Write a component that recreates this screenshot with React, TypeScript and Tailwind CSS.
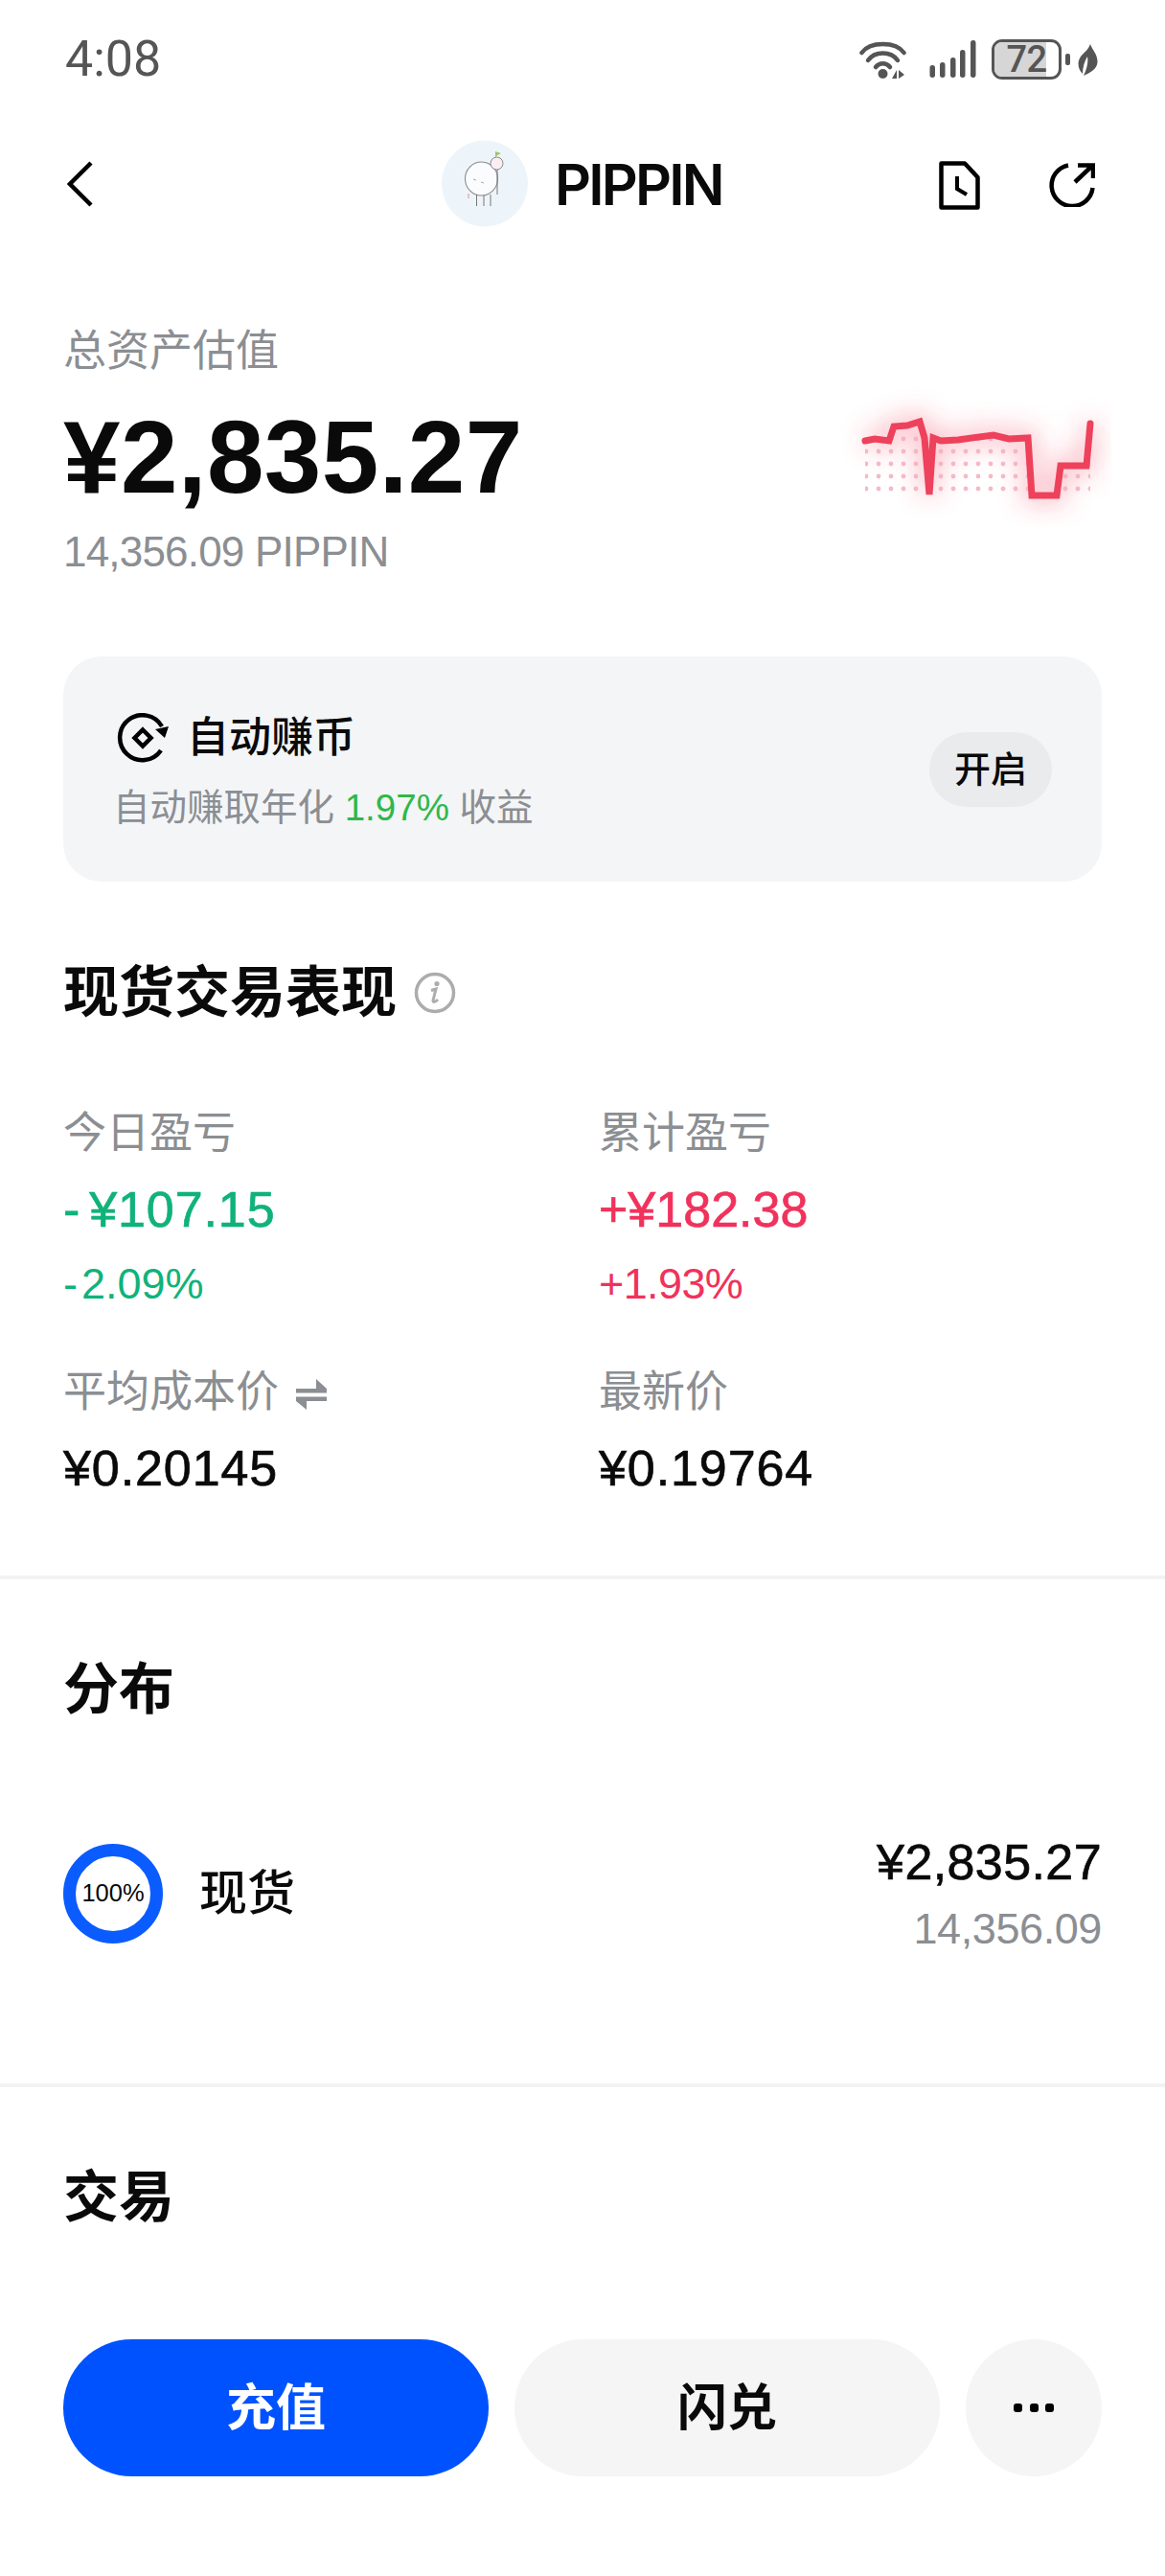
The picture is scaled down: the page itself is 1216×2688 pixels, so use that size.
import React from "react";

const line = "43,60 53,58 68,60 73,45 87,44 100,40 105,57 110,116 114,57 122,60 140,59 177,54 193,58 213,57 217,117 243,117 247,86 274,86 278,42";
const dots: [number, number][] = [];
for (let r = 0; r < 5; r++) for (let c = 0; c < 19; c++) dots.push([44 + c * 13, 58 + r * 13]);

function Spark() {
  return (
    <svg width="300" height="150" viewBox="0 0 300 150" className="mt-[56px] shrink-0">
      <defs>
        <clipPath id="under"><polygon points={`43,60 ${line} 278,125 43,125`} /></clipPath>
        <filter id="glow" x="-30%" y="-70%" width="160%" height="240%"><feGaussianBlur stdDeviation="13" /></filter>
      </defs>
      <polyline points={line} fill="none" stroke="#f4475f" strokeOpacity="0.34" strokeWidth="18" filter="url(#glow)" />
      <g clipPath="url(#under)">
        {dots.map(([x, y], i) => <circle key={i} cx={x} cy={y} r="2.400" fill="#f3aebc" fillOpacity="0.85" />)}
      </g>
      <polyline points={line} fill="none" stroke="#ee415b" strokeWidth="7" strokeLinecap="round" strokeLinejoin="miter" />
    </svg>
  );
}

function StatusIcons() {
  return (
    <div className="flex items-center">
      <svg width="49" height="39" viewBox="0 0 49 39" className="mr-[24px]">
        <g fill="none" stroke="#555" strokeWidth="4.500" strokeLinecap="round">
          <path d="M2.500 12C11 0 38 0 46.500 12" />
          <path d="M9 20C16 10 33 10 40 20" />
          <path d="M17 27C21 22 28 22 32 27" />
        </g>
        <circle cx="24.500" cy="34" r="5" fill="#555" />
        <path d="M39 30V39H34zM41 30L47 35 41 39z" fill="#555" />
      </svg>
      <svg width="49" height="40" viewBox="0 0 49 40" className="mr-[16px]">
        <g fill="#555">
          <rect x="0.500" y="26" width="5.500" height="13" rx="2.700" />
          <rect x="11" y="23" width="5.500" height="16" rx="2.700" />
          <rect x="22" y="18" width="5.500" height="21" rx="2.700" />
          <rect x="32" y="10" width="5.500" height="29" rx="2.700" />
          <rect x="43" y="0" width="5.500" height="39" rx="2.700" />
        </g>
      </svg>
      <div className="relative flex h-[42px] w-[73px] items-center justify-center overflow-hidden rounded-[11px] border-[3.500px] border-[#555] font-['Roboto',sans-serif] text-[38px] font-medium leading-none tracking-[-0.5px] text-[#555]">
        <div className="absolute inset-y-0 left-0 w-[54px] bg-[#d6d6d6]" />
        <span className="relative">72</span>
      </div>
      <div className="ml-[4px] mr-[8px] h-[12px] w-[5px] rounded-[2px] bg-[#555]" />
      <svg width="21" height="33" viewBox="0 0 21 33">
        <path d="M13 0C15 6 21 11 20.500 19C20 26 13 30 6 33C10 25 11 18 10 13C7 18 5 24 5 31C0 26 -1 19 3 13C7 8 11 6 13 0Z" fill="#555" />
      </svg>
    </div>
  );
}

const medium = "[-webkit-text-stroke:0.7px_currentColor]";

function Stat({ label, value, sub, tone, icon, track }: { label: string; value: React.ReactNode; sub?: React.ReactNode; tone?: string; icon?: boolean; track?: string }) {
  return (
    <div className="flex flex-col">
      <div className="flex h-[45px] items-center text-[45px] leading-none text-[#8b8e92]">
        {label}
        {icon && (
          <svg width="32" height="32" viewBox="0 0 32 32" className="ml-[18px] mt-[4px]">
            <path d="M0 10H21V0L32 10V14.500H0z" fill="#8b8e92" />
            <path d="M0 18.500H32V23H11V32L0 23z" fill="#8b8e92" />
          </svg>
        )}
      </div>
      <div className={`mt-[31px] text-[52px] leading-none ${track ?? "tracking-[0.9px]"} ${medium} ${tone ?? "text-[#0a0a0a]"}`}>{value}</div>
      {sub && <div className={`mt-[29px] text-[45px] leading-none ${tone}`}>{sub}</div>}
    </div>
  );
}

export default function App() {
  return (
    <div className="min-h-[2688px] w-[1216px] bg-white font-['Liberation_Sans','Noto_Sans_CJK_SC',sans-serif] text-[#0a0a0a]">
      <div className="flex h-[124px] items-center justify-between pl-[68px] pr-[70px]">
        <span className="font-['Roboto',sans-serif] text-[52px] leading-none text-[#555]">4:08</span>
        <StatusIcons />
      </div>

      <div className="flex h-[134px] items-center pl-[70px] pr-[73px]">
        <svg width="27" height="48" viewBox="0 0 27 48" className="mt-[2px]"><path d="M25 2L3 24l22 22" fill="none" stroke="#000" strokeWidth="4.500" /></svg>
        <svg width="90" height="91" viewBox="0 0 90 91" className="ml-[364px]">
          <circle cx="45" cy="45.500" r="45" fill="#edf5fb" />
          <ellipse cx="41.500" cy="40.500" rx="17" ry="17.500" fill="#fafcfe" stroke="#8b8b8b" strokeWidth="1.100" />
          <circle cx="57.500" cy="24.500" r="6.500" fill="#fbeef3" stroke="#8b8b8b" strokeWidth="1" />
          <path d="M56 19V12L62 14 58 16z" fill="#9cc46a" />
          <path d="M36.500 57V69M44 58V69M51 57V69M58 31V57" stroke="#777" strokeWidth="1" fill="none" />
          <path d="M33 41l3 1M41 44l3 1" stroke="#aaa" strokeWidth="1" />
          <path d="M28 56V61" stroke="#e8a6c0" strokeWidth="1.500" />
        </svg>
        <span className="ml-[28px] mt-[2px] font-['Inter',sans-serif] text-[59px] font-semibold leading-none tracking-[-2.800px]">PIPPIN</span>
        <div className="ml-auto mt-[4px] flex items-center gap-[72px]">
          <svg width="43" height="51" viewBox="0 0 43 51">
            <path d="M2.500 2.500H27L40.500 17V48.500H2.500z" fill="none" stroke="#000" strokeWidth="4.500" strokeLinejoin="round" />
            <path d="M19 16V29L29 35" fill="none" stroke="#000" strokeWidth="4" />
          </svg>
          <svg width="48" height="46" viewBox="0 0 48 46">
            <path d="M20 2.500A21.500 21.500 0 1 0 45.500 26" fill="none" stroke="#000" strokeWidth="4.500" />
            <path d="M27 20L45 3M30 2.500H46V16" fill="none" stroke="#000" strokeWidth="4.500" />
          </svg>
        </div>
      </div>

      <div className="mt-[86px] flex items-start justify-between pl-[66px] pr-[56px]">
        <div>
          <div className="text-[45px] leading-none text-[#8b8e92]">总资产估值</div>
          <div className="mt-[35px] text-[107px] font-bold leading-none tracking-[0.4px]">¥2,835.27</div>
          <div className="mt-[23px] text-[44px] leading-none tracking-[-0.8px] text-[#8b8e92]">14,356.09 PIPPIN</div>
        </div>
        <Spark />
      </div>

      <div className="mx-[66px] mt-[87px] flex h-[235px] items-center justify-between rounded-[40px] bg-[#f3f5f7] pl-[52px] pr-[52px]">
        <div className="flex flex-col">
          <div className="ml-[4px] mt-[2px] flex h-[52px] items-center gap-[19px]">
            <svg width="54" height="52" viewBox="0 0 54 52">
              <path d="M46 39A23.500 23.500 0 1 1 47 14" fill="none" stroke="#000" strokeWidth="4.500" />
              <path d="M54 14L50 26 40 17z" fill="#000" />
              <path d="M27 17.500L35.500 26 27 34.500 18.500 26z" fill="none" stroke="#000" strokeWidth="4.500" />
            </svg>
            <span className="text-[44px] font-medium leading-none">自动赚币</span>
          </div>
          <div className="mt-[28px] text-[38.500px] leading-none text-[#8b8e92]">
            自动赚取年化 <span className="text-[#2eb84a]">1.97%</span> 收益
          </div>
        </div>
        <div className="flex h-[78px] w-[128px] items-center justify-center rounded-full bg-[#eaebed] text-[38px] font-medium leading-none">开启</div>
      </div>

      <div className="ml-[66px] mt-[87px] flex items-center">
        <span className="text-[58px] font-semibold leading-none">现货交易表现</span>
        <svg width="44" height="44" viewBox="0 0 44 44" className="ml-[18px]">
          <circle cx="22" cy="22" r="19.500" fill="none" stroke="#acacac" strokeWidth="3.500" />
          <path d="M18 19.500L23 18 20 30C20 32 22 32 25 29" fill="none" stroke="#acacac" strokeWidth="3" />
          <circle cx="24" cy="12.500" r="2.600" fill="#acacac" />
        </svg>
      </div>

      <div className="ml-[66px] mt-[95px] grid grid-cols-[559px_1fr] gap-y-[68px]">
        <Stat label="今日盈亏" value={<><span className="mr-[9px]">-</span>¥107.15</>} sub={<><span className="mr-[4px]">-</span>2.09%</>} tone="text-[#10b27a]" />
        <Stat label="累计盈亏" value="+¥182.38" sub={<span className="tracking-[-0.6px]">+1.93%</span>} tone="text-[#f0325c]" track="tracking-[0px]" />
        <Stat label="平均成本价" value="¥0.20145" icon />
        <Stat label="最新价" value="¥0.19764" />
      </div>

      <div className="mt-[86px] h-[4px] bg-[#f3f3f3]" />

      <div className="ml-[66px] mt-[86px] text-[58px] font-semibold leading-none">分布</div>

      <div className="mt-[125px] flex items-center justify-between px-[66px]">
        <div className="flex items-center">
          <div className="flex h-[104px] w-[104px] items-center justify-center rounded-full border-[13px] border-[#0a5cff] text-[25.500px] leading-none">100%</div>
          <span className="ml-[38px] text-[50px] font-medium leading-none">现货</span>
        </div>
        <div className="flex flex-col items-end">
          <span className={`text-[52px] leading-none tracking-[0.4px] ${medium}`}>¥2,835.27</span>
          <span className="mt-[21px] text-[45px] leading-none tracking-[-0.4px] text-[#8b8e92]">14,356.09</span>
        </div>
      </div>

      <div className="mt-[139px] h-[4px] bg-[#f3f3f3]" />

      <div className="ml-[66px] mt-[86px] text-[58px] font-semibold leading-none">交易</div>

      <div className="mt-[119px] flex gap-[27px] px-[66px]">
        <div className="flex h-[143px] w-[444px] items-center justify-center rounded-full bg-[#0052ff] text-[52px] font-semibold leading-none text-white">充值</div>
        <div className="flex h-[143px] w-[444px] items-center justify-center rounded-full bg-[#f5f5f5] text-[52px] font-semibold leading-none">闪兑</div>
        <div className="flex h-[143px] w-[142px] items-center justify-center gap-[7.500px] rounded-full bg-[#f5f5f5]">
          <div className="h-[9px] w-[9px] rounded-[3px] bg-black" />
          <div className="h-[9px] w-[9px] rounded-[3px] bg-black" />
          <div className="h-[9px] w-[9px] rounded-[3px] bg-black" />
        </div>
      </div>
    </div>
  );
}
